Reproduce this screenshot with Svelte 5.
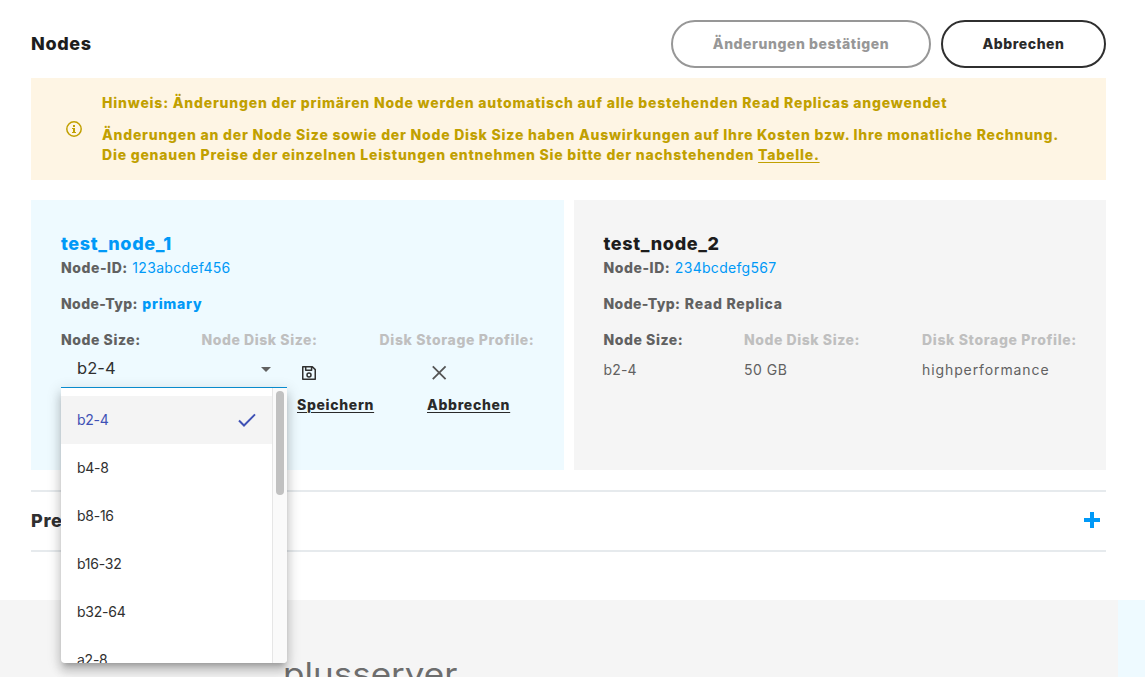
<script>
  const sizes = ['b2-4', 'b4-8', 'b8-16', 'b16-32', 'b32-64', 'a2-8'];
  let selected = $state('b2-4');
</script>

<div class="page">
  <main>
    <header>
      <h1>Nodes</h1>
      <button class="pill confirm" disabled><span>Änderungen bestätigen</span></button>
      <button class="pill cancel"><span>Abbrechen</span></button>
    </header>

    <section class="notice">
      <svg width="16" height="16" viewBox="0 0 16 16">
        <circle cx="8" cy="8" r="7.2" fill="none" stroke="currentColor" stroke-width="1.5" />
        <path fill="currentColor" d="M7 4h2v2H7zM6 7h3v4h1v1H6v-1h1V8H6z" />
      </svg>
      <div>
        <p class="hint">Hinweis: Änderungen der primären Node werden automatisch auf alle bestehenden Read Replicas angewendet</p>
        <p class="cost">Änderungen an der Node Size sowie der Node Disk Size haben Auswirkungen auf Ihre Kosten bzw. Ihre monatliche Rechnung.</p>
        <p class="price">Die genauen Preise der einzelnen Leistungen entnehmen Sie bitte der nachstehenden <a href="#preise">Tabelle.</a></p>
      </div>
    </section>

    <section class="nodes">
      <article class="primary">
        <h2>test_node_1</h2>
        <p class="line"><b>Node-ID:</b> <span class="id">123abcdef456</span></p>
        <p class="line typ"><b>Node-Typ:</b> <b class="role">primary</b></p>
        <div class="cols heads">
          <b>Node Size:</b>
          <b class="dim">Node Disk Size:</b>
          <b class="dim profile">Disk Storage Profile:</b>
        </div>
        <div class="edit">
          <div class="select">
            <span class="value">{selected}</span>
            <svg width="10" height="5" viewBox="0 0 10 5"><path d="M0 0h10L5 5z" fill="#616161" /></svg>
            <div class="menu">
              <ul>
                {#each sizes as size}
                  <li class:active={size === selected}>
                    <button onclick={() => (selected = size)}>{size}</button>
                    {#if size === selected}
                      <svg width="18" height="14" viewBox="0 0 18 14"><path d="M1 7.5l5 5L17 1.4" fill="none" stroke="#3f51b5" stroke-width="2" /></svg>
                    {/if}
                  </li>
                {/each}
              </ul>
              <div class="track"><i></i></div>
            </div>
          </div>
          <div class="action save">
            <svg width="24" height="24" viewBox="0 0 24 24" fill="none" stroke="#303030" stroke-width="1.5" stroke-linejoin="round">
              <path d="M5.75 5.75h9.6l2.9 2.9v9.6H5.75z M8.7 5.75v3.5h5.9v-3.5" />
              <circle cx="12" cy="14.1" r="2" />
            </svg>
            <a href="#speichern">Speichern</a>
          </div>
          <div class="action abort">
            <svg width="24" height="24" viewBox="0 0 24 24" fill="none" stroke="#555" stroke-width="1.8">
              <path d="M5.8 5.3l12.8 12.8M18.6 5.3L5.8 18.1" />
            </svg>
            <a href="#abbrechen">Abbrechen</a>
          </div>
        </div>
      </article>

      <article class="replica">
        <h2>test_node_2</h2>
        <p class="line"><b>Node-ID:</b> <span class="id">234bcdefg567</span></p>
        <p class="line typ"><b>Node-Typ:</b> <b class="role">Read Replica</b></p>
        <div class="cols heads">
          <b>Node Size:</b>
          <b class="dim">Node Disk Size:</b>
          <b class="dim profile">Disk Storage Profile:</b>
        </div>
        <div class="cols values">
          <span>b2-4</span>
          <span class="gb">50 GB</span>
          <span class="perf">highperformance</span>
        </div>
      </article>
    </section>

    <section class="accordion">
      <h2>Preise</h2>
      <svg width="16" height="16" viewBox="0 0 16 16"><path d="M6 0h4v6h6v4h-6v6H6v-6H0V6h6z" fill="#0099f7" /></svg>
    </section>
  </main>

  <footer>
    <div class="brand"><span>plusserver</span></div>
    <div class="side"></div>
  </footer>
</div>

<style>
  :global(body) { background: #fff; overflow: hidden; }
  .page {
    height: 677px;
    overflow: hidden;
    display: flex;
    flex-direction: column;
    font-family: Inter, sans-serif;
    font-size: 14px;
    line-height: 20px;
    letter-spacing: 0.56px;
    color: #616161;
  }
  h1, h2, p, ul { margin: 0; padding: 0; }
  button { font: inherit; letter-spacing: inherit; color: inherit; background: none; border: 0; padding: 0; }
  b { font-weight: 800; }
  main { height: 600px; flex: none; padding: 20px 39px 0 31px; box-sizing: border-box; }

  header { display: flex; align-items: center; gap: 10px; height: 48px; margin-bottom: 10px; }
  h1, h2 { font-size: 18px; line-height: 24px; font-weight: 800; color: #1d1d1d; letter-spacing: 0.65px; }
  h1 { flex: 1; }
  .pill { height: 48px; border: 2px solid #2f2f2f; border-radius: 24px; color: #2a2a2a; font-weight: 800; box-sizing: border-box; }
  .confirm { width: 260px; border-color: #979797; color: #979797; }
  .cancel { width: 165px; }

  .notice { height: 102px; background: #fef5e4; color: #c1a000; font-weight: 800; display: flex; align-items: center; padding: 0 35px; gap: 20px; box-sizing: border-box; white-space: nowrap; }
  .notice svg { flex: none; }
  .hint { margin-bottom: 12px; letter-spacing: 0.79px; }
  .cost { letter-spacing: 0.775px; }
  .price { letter-spacing: 0.775px; }
  a { text-decoration-thickness: 1px; text-underline-offset: 2px; }
  .notice a { color: inherit; }

  .nodes { display: grid; grid-template-columns: 533px 532px; gap: 10px; margin-top: 20px; height: 270px; }
  article { padding: 32px 30px 0; white-space: nowrap; }
  .primary { background: #eefaff; }
  .replica { background: #f5f5f5; padding-left: 29.5px; }
  .primary h2, .primary .role { color: #0099f7; }
  .typ { letter-spacing: 0.4px; }
  .role { letter-spacing: 0.75px; }
  .line { height: 20px; margin: 2px 0 16px; }
  .line + .line { margin-top: 0; }
  .id { color: #0099f7; letter-spacing: 0.3px; }
  .cols { display: grid; grid-template-columns: 140.5px 178px 1fr; }
  .dim { color: #bfbfbf; }
  .profile { letter-spacing: 0.65px; }
  .values { margin-top: 10px; letter-spacing: 0.15px; }
  .gb { letter-spacing: 0.5px; }
  .perf { letter-spacing: 0.9px; }

  .edit { display: flex; }
  .select { position: relative; width: 226px; height: 38px; box-sizing: border-box; border-bottom: 1px solid #0c93d8; display: flex; align-items: center; justify-content: space-between; padding: 0 16px; color: #303030; }
  .value { font-size: 16.5px; letter-spacing: 0.1px; padding-bottom: 2px; }
  .select > svg { margin-top: 2px; }
  .menu { position: absolute; left: 0; top: 38px; width: 226px; height: 275px; background: #fff; border-radius: 0 0 4px 4px; display: flex; overflow: hidden; z-index: 2; letter-spacing: -0.25px;
    box-shadow: 0 5px 5px -3px rgba(0,0,0,.2), 0 8px 10px 1px rgba(0,0,0,.14), 0 3px 14px 2px rgba(0,0,0,.12); }
  ul { list-style: none; flex: 1; padding-top: 8px; }
  li { height: 48px; display: flex; align-items: center; justify-content: space-between; padding: 0 16px; }
  li.active { background: #f4f4f4; color: #3f51b5; }
  .track { width: 8px; border-left: 1px solid #e6e6e6; background: #fafafa; padding: 3px 3px 0; }
  .track i { display: block; height: 104px; border-radius: 4px; background: #c1c1c1; }
  .action { display: flex; flex-direction: column; padding-top: 11px; gap: 10px; }
  .action a { color: #2a2a2a; font-weight: 800; letter-spacing: 0.68px; }
  .save { margin-left: 10px; width: 130px; }

  .accordion { margin-top: 20px; height: 62px; box-sizing: border-box; border: solid #e6eaed; border-width: 2px 0; display: flex; align-items: center; justify-content: space-between; padding-right: 6px; }
  .accordion h2 { color: #303030; }
  .accordion svg { margin-bottom: 2px; }

  footer { flex: 1; background: #f5f5f5; display: flex; justify-content: space-between; overflow: hidden; }
  .brand { padding: 56px 0 0 283px; font-size: 31px; line-height: 36px; color: #6d6d6d; letter-spacing: 0; white-space: nowrap; }
  .brand span { display: inline-block; transform: scaleX(1.13); transform-origin: left; }
  .side { width: 27px; background: #eefaff; }
</style>
